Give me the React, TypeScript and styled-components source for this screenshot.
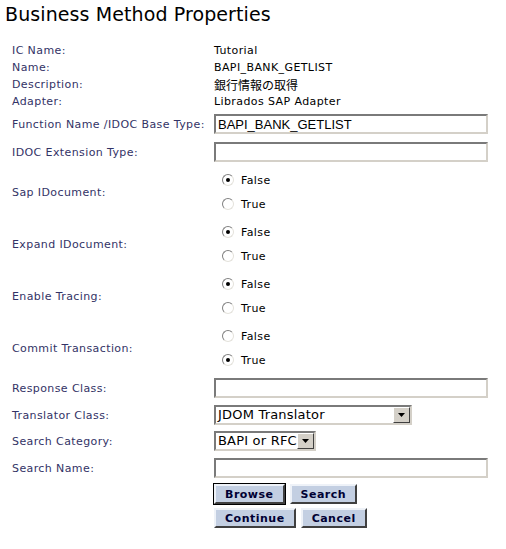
import React from 'react';
import styled, { createGlobalStyle } from 'styled-components';

const GlobalStyle = createGlobalStyle`
  body {
    margin: 0;
    background: #ffffff;
    font-family: "DejaVu Sans", Verdana, sans-serif;
  }
`

const Page = styled.div`
  width: 506px;
  padding: 0 0 0 5px;
  box-sizing: border-box;
`

const Title = styled.h1`
  margin: 0;
  padding-top: 2px;
  height: 40px;
  font-size: 19px;
  font-weight: normal;
  line-height: 24px;
  letter-spacing: 0.1px;
  color: #000000;
`

const Form = styled.div`
  display: flex;
  flex-direction: column;
  padding-left: 7px;
  letter-spacing: 0.4px;
`

const Row = styled.div<{ $h: number }>`
  display: grid;
  grid-template-columns: 202px 1fr;
  align-items: center;
  height: ${p => p.$h}px;
`

const Label = styled.span`
  font-size: 11px;
  color: #333366;
`

const Value = styled.span<{ $cjk?: boolean }>`
  font-size: ${p => (p.$cjk ? '12px' : '11px')};
  font-family: ${p => (p.$cjk ? '"Noto Sans CJK JP", "DejaVu Sans", sans-serif' : 'inherit')};
  letter-spacing: ${p => (p.$cjk ? '0' : '0.4px')};
  color: #000000;
`

const TextInput = styled.input`
  box-sizing: border-box;
  width: 274px;
  height: 20px;
  margin: 0;
  padding: 0 2px;
  border: 2px solid;
  border-color: #7a7a7a #d4d0c8 #d4d0c8 #7a7a7a;
  font-family: "Liberation Sans", Arial, sans-serif;
  font-size: 13px;
  line-height: 16px;
  letter-spacing: 0;
  color: #000000;
  outline: none;
`

const RadioStack = styled.div`
  display: flex;
  flex-direction: column;
`

const RadioLine = styled.label`
  display: flex;
  align-items: center;
  height: 24px;
  padding-left: 8px;
  gap: 7px;
  font-size: 11px;
  color: #000000;
`

const RadioDot = styled.span<{ $on: boolean }>`
  position: relative;
  box-sizing: border-box;
  width: 12px;
  height: 12px;
  border-radius: 50%;
  border: 1px solid;
  border-color: #808080 #e4e2dc #e4e2dc #808080;
  background: #ffffff;

  &::after {
    content: '';
    display: ${p => (p.$on ? 'block' : 'none')};
    position: absolute;
    left: 3px;
    top: 3px;
    width: 4px;
    height: 4px;
    border-radius: 50%;
    background: #000000;
  }
`

const SelectBox = styled.div<{ $w: number }>`
  box-sizing: border-box;
  display: flex;
  align-items: stretch;
  width: ${p => p.$w}px;
  height: 20px;
  border: 2px solid;
  border-color: #7a7a7a #d4d0c8 #d4d0c8 #7a7a7a;
  background: #ffffff;
`

const SelectText = styled.span`
  flex: 1;
  padding-left: 2px;
  font-size: 13px;
  line-height: 16px;
  letter-spacing: 0.2px;
  color: #000000;
  white-space: nowrap;
  overflow: hidden;
`

const SelectArrow = styled.span`
  box-sizing: border-box;
  width: 17px;
  display: flex;
  align-items: center;
  justify-content: center;
  background: #d4d0c8;
  border: 1px solid;
  border-color: #ffffff #404040 #404040 #ffffff;
`

const ButtonRow = styled.div`
  display: flex;
  gap: 5px;
`

const Button = styled.button<{ $focus?: boolean }>`
  box-sizing: border-box;
  height: 20px;
  padding: 0 9px;
  margin: 0;
  font-family: "DejaVu Sans", Verdana, sans-serif;
  font-size: 11px;
  font-weight: bold;
  letter-spacing: 0.5px;
  color: #000033;
  background: #c3cfe2;
  border: 2px solid;
  border-color: #eef2f8 #404040 #404040 #eef2f8;
  outline: ${p => (p.$focus ? '1px solid #000000' : 'none')};
  outline-offset: 0;
`

const Select: React.FC<{ width: number; text: string }> = ({ width, text }) => (
  <SelectBox $w={width}>
    <SelectText>{text}</SelectText>
    <SelectArrow>
      <svg width="7" height="4" viewBox="0 0 7 4">
        <path d="M0 0h7L3.5 4z" fill="#000" />
      </svg>
    </SelectArrow>
  </SelectBox>
)

const RadioGroup: React.FC<{ label: string; value: boolean }> = ({ label, value }) => (
  <Row $h={52}>
    <Label>{label}</Label>
    <RadioStack>
      <RadioLine><RadioDot $on={!value} />False</RadioLine>
      <RadioLine><RadioDot $on={value} />True</RadioLine>
    </RadioStack>
  </Row>
)

const info = [
  ['IC Name:', 'Tutorial'],
  ['Name:', 'BAPI_BANK_GETLIST'],
  ['Description:', '銀行情報の取得'],
  ['Adapter:', 'Librados SAP Adapter'],
]

const App: React.FC = () => {
  return <Page>
    <GlobalStyle />
    <Title>Business Method Properties</Title>
    <Form>
      {info.map(([k, v]) => (
        <Row $h={17} key={k}>
          <Label>{k}</Label>
          <Value $cjk={k === 'Description:'}>{v}</Value>
        </Row>
      ))}
      <Row $h={28}>
        <Label>Function Name /IDOC Base Type:</Label>
        <TextInput defaultValue="BAPI_BANK_GETLIST" />
      </Row>
      <Row $h={28}>
        <Label>IDOC Extension Type:</Label>
        <TextInput />
      </Row>
      <RadioGroup label="Sap IDocument:" value={false} />
      <RadioGroup label="Expand IDocument:" value={false} />
      <RadioGroup label="Enable Tracing:" value={false} />
      <RadioGroup label="Commit Transaction:" value={true} />
      <Row $h={28}>
        <Label>Response Class:</Label>
        <TextInput />
      </Row>
      <Row $h={26}>
        <Label>Translator Class:</Label>
        <Select width={198} text="JDOM Translator" />
      </Row>
      <Row $h={26}>
        <Label>Search Category:</Label>
        <Select width={102} text="BAPI or RFC" />
      </Row>
      <Row $h={28}>
        <Label>Search Name:</Label>
        <TextInput />
      </Row>
      <Row $h={24}>
        <span />
        <ButtonRow>
          <Button $focus>Browse</Button>
          <Button>Search</Button>
        </ButtonRow>
      </Row>
      <Row $h={24}>
        <span />
        <ButtonRow>
          <Button>Continue</Button>
          <Button>Cancel</Button>
        </ButtonRow>
      </Row>
    </Form>
  </Page>
}

export default App;
